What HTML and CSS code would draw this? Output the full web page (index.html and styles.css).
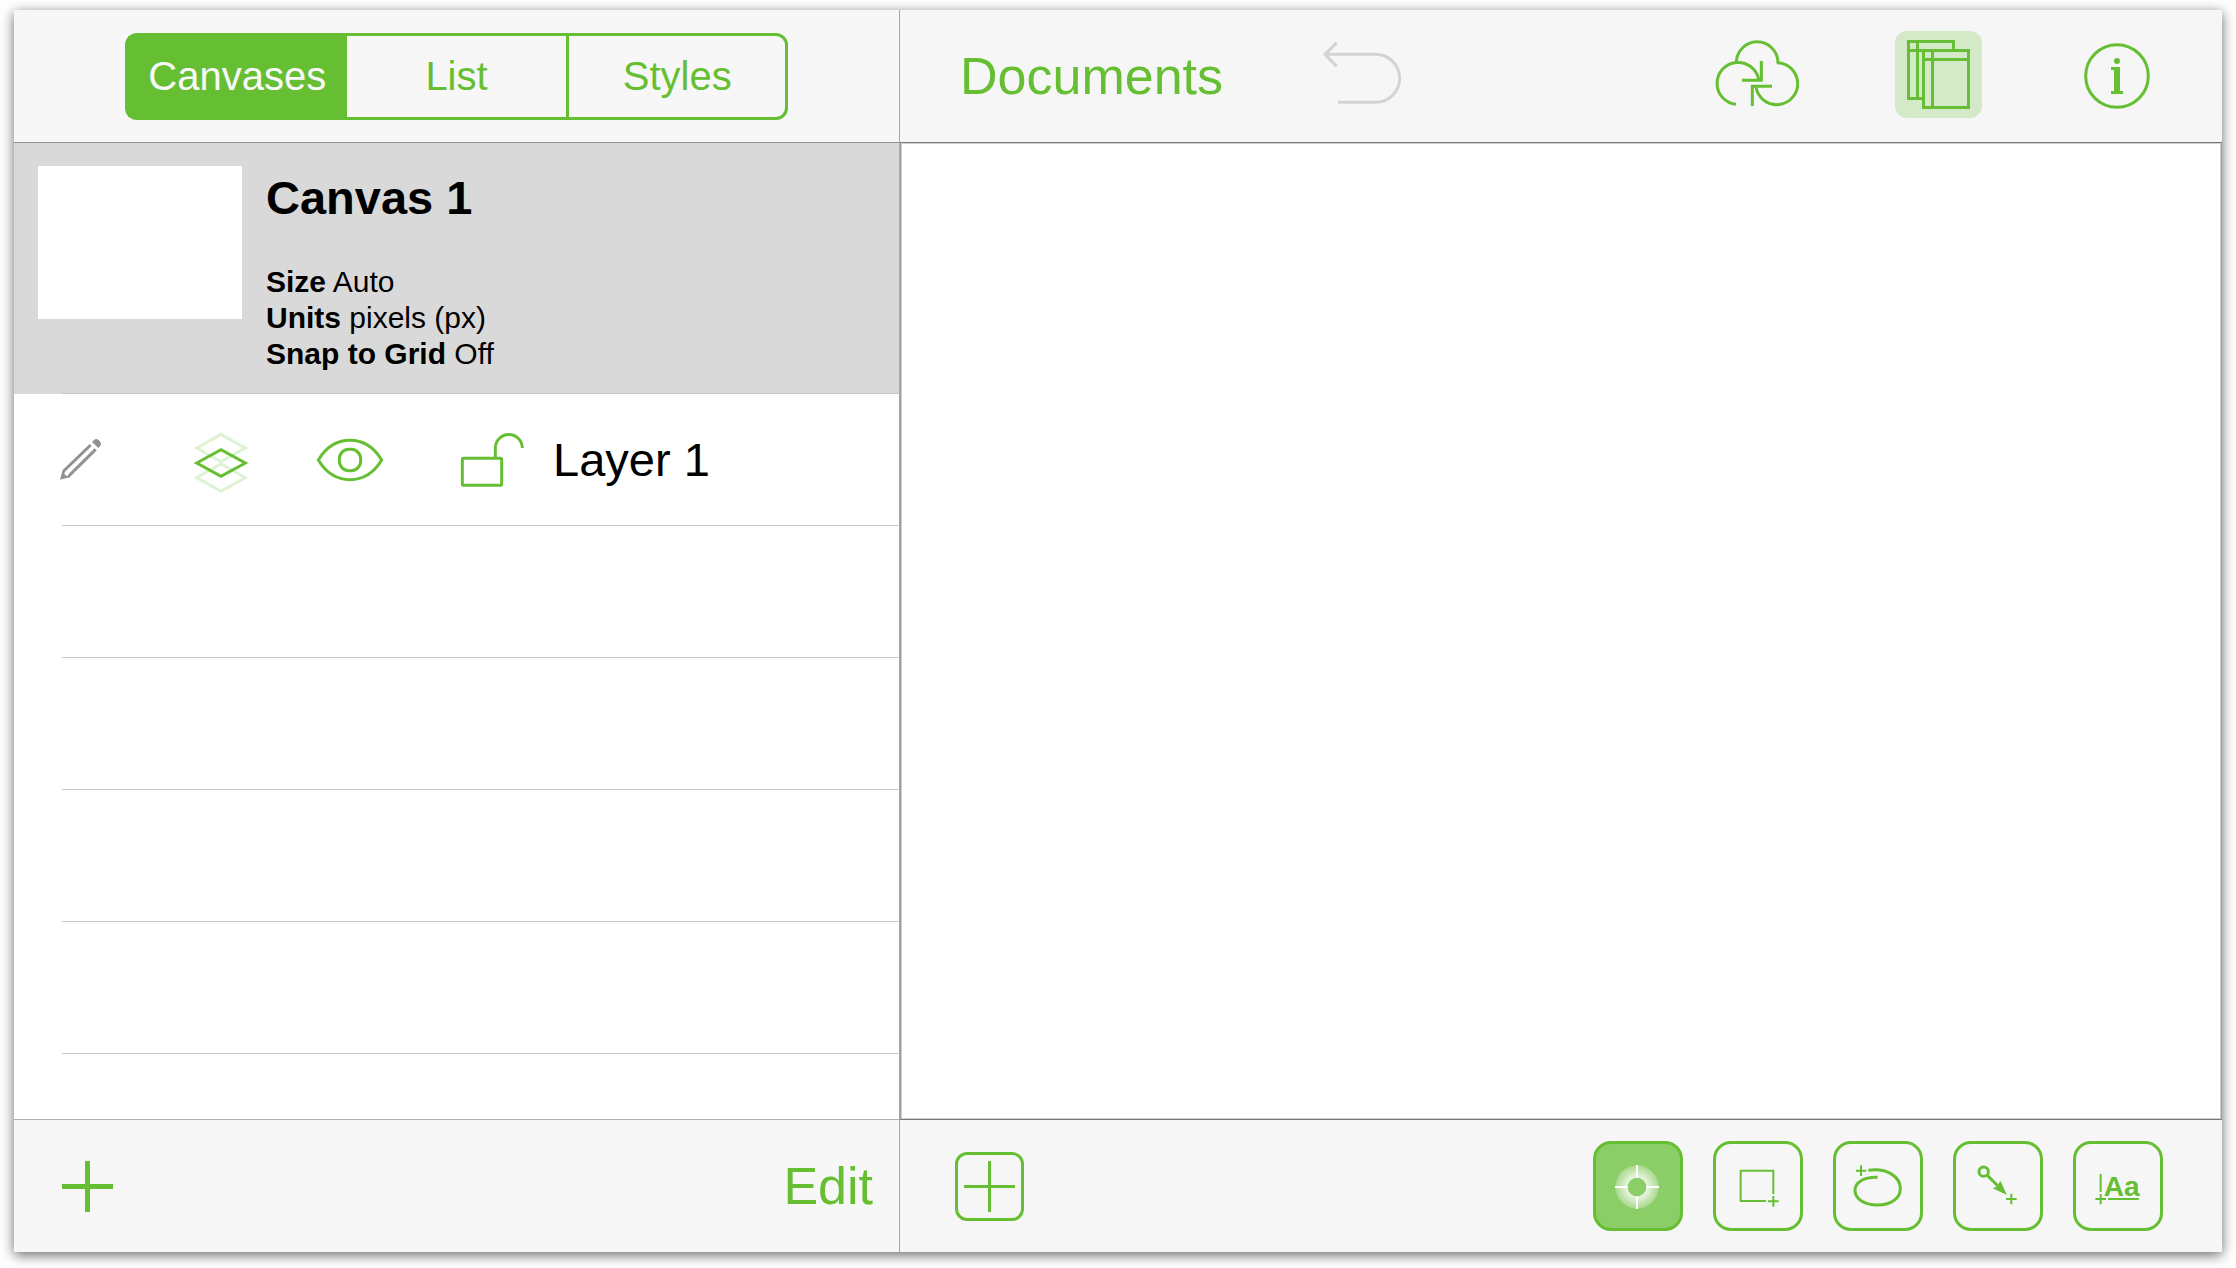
FILE: index.html
```html
<!DOCTYPE html>
<html lang="en">
<head>
  <meta charset="UTF-8">
  <title>Canvas 1</title>
  <link rel="stylesheet" href="styles.css">
</head>
<body>
  <div class="window">
    <aside class="sidebar">
      <div class="bar sidebar-top">
        <div class="segments">
          <button class="segment active" type="button">Canvases</button>
          <button class="segment" type="button">List</button>
          <button class="segment" type="button">Styles</button>
        </div>
      </div>

      <div class="canvas-item">
        <div class="thumbnail"></div>
        <div class="canvas-info">
          <h2>Canvas 1</h2>
          <p><b>Size</b> Auto</p>
          <p><b>Units</b> pixels (px)</p>
          <p><b>Snap to Grid</b> Off</p>
        </div>
      </div>

      <ul class="layers">
        <li class="layer">
          <button class="icon-button" type="button" aria-label="Drawing layer">
            <svg width="40" height="41" viewBox="186 180 120 123">
              <path d="M272 198L192 275L189 294L206 291L287 211" fill="none" stroke="#929292" stroke-width="9"/>
              <path d="M279 205L199 282" fill="none" stroke="#fff" stroke-width="6"/>
              <path d="M180 302L187 276L207 295Z" fill="#929292"/>
              <path d="M197 283L201 287" stroke="#fff" stroke-width="8" stroke-linecap="round"/>
              <path d="M276 189L283 182Q289 177 296 183L301 189Q306 195 301 201L295 207Z" fill="#929292"/>
            </svg>
          </button>
          <button class="icon-button" type="button" aria-label="Layer type">
            <svg width="54" height="68" viewBox="582 138 162 204" fill="none" stroke="#66bf33" stroke-width="9">
              <g stroke="#e0f2d6">
                <path d="M590 204L663 163L736 204L663 245Z"/>
                <path d="M590 293L663 252L736 293L663 334Z"/>
              </g>
              <path d="M590 249L663 209L736 249L663 289Z"/>
            </svg>
          </button>
          <button class="icon-button" type="button" aria-label="Visible">
            <svg width="66" height="42" viewBox="951 177 198 126" fill="none" stroke="#66bf33" stroke-width="9">
              <path d="M955 240C978 202 1012 181 1050 181S1122 202 1145 240C1122 278 1088 299 1050 299S978 278 955 240Z"/>
              <rect x="1018" y="208" width="64" height="64" rx="29"/>
            </svg>
          </button>
          <button class="icon-button" type="button" aria-label="Unlocked">
            <svg width="63" height="54" viewBox="183 159 189 162" fill="none" stroke="#66bf33" stroke-width="9">
              <rect x="187" y="235" width="118" height="81" rx="4"/>
              <path d="M286 235V204A40 40 0 0 1 367 204"/>
            </svg>
          </button>
          <span class="layer-name">Layer 1</span>
        </li>
        <li class="layer"></li>
        <li class="layer"></li>
        <li class="layer"></li>
        <li class="layer"></li>
      </ul>

      <div class="bar sidebar-bottom">
        <button class="icon-button" type="button" aria-label="Add">
          <svg width="51" height="51" viewBox="0 0 102 102" stroke="#66bf33" stroke-width="10">
            <path d="M0 51H102M51 0V102"/>
          </svg>
        </button>
        <button class="text-button" type="button">Edit</button>
      </div>
    </aside>

    <main class="editor">
      <div class="bar editor-top">
        <button class="text-button" type="button">Documents</button>
        <button class="icon-button undo" type="button" aria-label="Undo" disabled>
          <svg width="81" height="72" viewBox="1179 120 243 216" fill="none" stroke="#d3d3d3" stroke-width="9">
            <path d="M1185 163H1337A72 72 0 0 1 1337 307H1224"/>
            <path d="M1220 128L1185 163L1220 199"/>
          </svg>
        </button>
        <div class="actions">
          <button class="icon-button" type="button" aria-label="Sync">
            <svg width="84" height="72" viewBox="75 90 252 216" fill="none" stroke="#66bf33" stroke-width="9">
              <path d="M139 158A62 62 0 0 1 264 158"/>
              <path d="M138 283A63 63 0 1 1 206 208"/>
              <path d="M260 158A63 63 0 1 1 198 232"/>
              <path d="M214 153V211H156M187 288V229H246"/>
            </svg>
          </button>
          <button class="icon-button" type="button" aria-label="Canvases">
            <svg width="87" height="90" viewBox="615 63 261 270" fill="none" stroke="#66bf33" stroke-width="9">
              <rect x="615" y="63" width="261" height="261" rx="36" fill="#d4e9c8" stroke="none"/>
              <path d="M700 265.5H655.5V94.5H790.5V121M682.5 94V265M655 121.5H700"/>
              <path d="M700.5 121.5H835.5V292.5H700.5ZM727.5 121V292M700 148.5H835"/>
            </svg>
          </button>
          <button class="icon-button" type="button" aria-label="Info">
            <svg width="78" height="66" viewBox="174 129 234 198" fill="#66bf33">
              <circle cx="291" cy="228" r="94" fill="none" stroke="#66bf33" stroke-width="9"/>
              <circle cx="291" cy="183" r="9"/>
              <path d="M273 201H300V273H309V282H273V273H282V210H273Z"/>
            </svg>
          </button>
        </div>
      </div>

      <div class="canvas"></div>

      <div class="bar editor-bottom">
        <button class="add-button" type="button" aria-label="Add object">
          <svg width="51" height="51" viewBox="0 0 102 102" stroke="#66bf33" stroke-width="6">
            <path d="M0 51H102M51 0V102"/>
          </svg>
        </button>
        <div class="tools">
          <button class="tool selected" type="button" aria-label="Select">
            <svg width="84" height="84" viewBox="78 102 252 252">
              <defs>
                <radialGradient id="glow">
                  <stop offset="0.4" stop-color="#fff" stop-opacity="0.85"/>
                  <stop offset="1" stop-color="#fff" stop-opacity="0.25"/>
                </radialGradient>
              </defs>
              <circle cx="201" cy="231" r="65" fill="url(#glow)"/>
              <path d="M201 165V297M135 231H267" stroke="#fff" stroke-width="6"/>
              <circle cx="201" cy="231" r="28" fill="#8bcd66"/>
            </svg>
          </button>
          <button class="tool" type="button" aria-label="Shape">
            <svg width="84" height="84" viewBox="438 102 252 252" fill="none" stroke="#66bf33" stroke-width="6">
              <path d="M588 273H512V182H610V252"/>
              <path d="M594 274H626M610 258V290"/>
            </svg>
          </button>
          <button class="tool" type="button" aria-label="Freehand">
            <svg width="84" height="84" viewBox="798 102 252 252" fill="none" stroke="#66bf33" stroke-width="9">
              <path d="M895 181C950 172 991 200 991 236C991 267 960 285 922 285C882 285 855 266 855 241C855 217 880 201 923 202"/>
              <path d="M858 182H889M873 166V198" stroke-width="6"/>
            </svg>
          </button>
          <button class="tool" type="button" aria-label="Line">
            <svg width="84" height="84" viewBox="108 102 252 252" fill="none" stroke="#66bf33" stroke-width="9">
              <circle cx="191" cy="185" r="14"/>
              <path d="M202 196L240 234"/>
              <path d="M261 255L218 235L232 229L241 212Z" fill="#66bf33" stroke="none"/>
              <path d="M258 267H290M274 251V283" stroke-width="6"/>
            </svg>
          </button>
          <button class="tool" type="button" aria-label="Text">
            <svg width="84" height="84" viewBox="468 102 252 252" stroke="#66bf33" stroke-width="6">
              <path d="M542 192V246M564 267H656M526 267H558M542 252V283"/>
              <text class="tool-text" x="551" y="257">Aa</text>
            </svg>
          </button>
        </div>
      </div>
    </main>
  </div>
</body>
</html>
```
FILE: styles.css
```css
* {
  box-sizing: border-box;
}
body {
  margin: 0;
  padding: 10px 14px 16px;
  min-height: 100vh;
  display: flex;
  background: #fff;
  color: #000;
  font-family: "Liberation Sans", Arial, sans-serif;
}
button {
  margin: 0;
  padding: 0;
  border: 0;
  background: none;
  color: #66bf33;
  font-family: inherit;
  cursor: pointer;
}
svg {
  display: block;
}
h2, p, ul {
  margin: 0;
  padding: 0;
}
.window {
  flex: 1;
  display: grid;
  grid-template-columns: 886px 1fr;
  box-shadow: 0 3px 12px rgba(0, 0, 0, 0.6);
}
.sidebar, .editor {
  display: flex;
  flex-direction: column;
}
.sidebar {
  background: #fff;
  border-right: 1px solid #a6a6a6;
}
.bar {
  height: 133px;
  flex: none;
  display: flex;
  align-items: center;
  background: #f7f7f7;
}
.text-button {
  font-size: 52px;
  line-height: 60px;
}

/* sidebar */
.sidebar-top {
  justify-content: center;
  border-bottom: 1px solid #929292;
}
.segments {
  display: grid;
  grid-template-columns: repeat(3, 1fr);
  width: 75%;
  height: 87px;
  border: 3px solid #66bf33;
  border-radius: 12px;
}
.segment {
  font-size: 40px;
}
.segment + .segment {
  border-left: 3px solid #66bf33;
}
.segment.active {
  background: #66bf33;
  color: #f8f8f8;
}
.segment.active + .segment {
  border-left: 0;
}
.canvas-item {
  position: relative;
  height: 251px;
  padding: 23px 24px;
  display: flex;
  gap: 24px;
  background: #d9d9d9;
}
.canvas-item::after {
  content: "";
  position: absolute;
  left: 48px;
  right: 0;
  bottom: 0;
  border-bottom: 1px solid #c4c4c4;
}
.thumbnail {
  width: 204px;
  height: 153px;
  background: #fff;
}
.canvas-info h2 {
  margin-bottom: 34px;
  font-size: 47px;
  line-height: 64px;
}
.canvas-info p {
  font-size: 30px;
  line-height: 36px;
}
.layers {
  flex: 1;
  list-style: none;
}
.layer {
  height: 132px;
  margin-left: 48px;
  display: grid;
  grid-template-columns: 132px 123px 144px 92px 1fr;
  align-items: center;
  border-bottom: 1px solid #c8c8c8;
}
.layer svg {
  overflow: visible;
}
.layer-name {
  font-size: 47px;
  line-height: 56px;
}
.layer .icon-button {
  justify-self: start;
}
.sidebar-bottom {
  justify-content: space-between;
  padding: 0 26px 0 48px;
  border-top: 1px solid #b2b2b2;
}

/* editor */
.editor .bar {
  background: #f6f6f6;
}
.editor-top {
  padding: 0 66px 0 60px;
  border-bottom: 1px solid #777;
}
.undo {
  margin-left: 100px;
}
.actions {
  display: flex;
  align-items: center;
  gap: 96px;
  margin-left: auto;
}
.canvas {
  flex: 1;
  background: #fff;
  border: solid #a0a0a0;
  border-width: 0 1px;
  box-shadow: inset 0 0 0 1px #cfcfcf;
}
.editor-bottom {
  justify-content: space-between;
  padding: 0 59px 0 55px;
  border-top: 1px solid #777;
}
.add-button {
  padding: 6px;
  border: 3px solid #66bf33;
  border-radius: 12px;
}
.tools {
  display: flex;
  gap: 30px;
}
.tool {
  border: 3px solid #66bf33;
  border-radius: 18px;
}
.tool.selected {
  background: #8bcd66;
}
.tool-text {
  font-size: 84px;
  font-weight: bold;
  fill: #66bf33;
  stroke: none;
}
```
